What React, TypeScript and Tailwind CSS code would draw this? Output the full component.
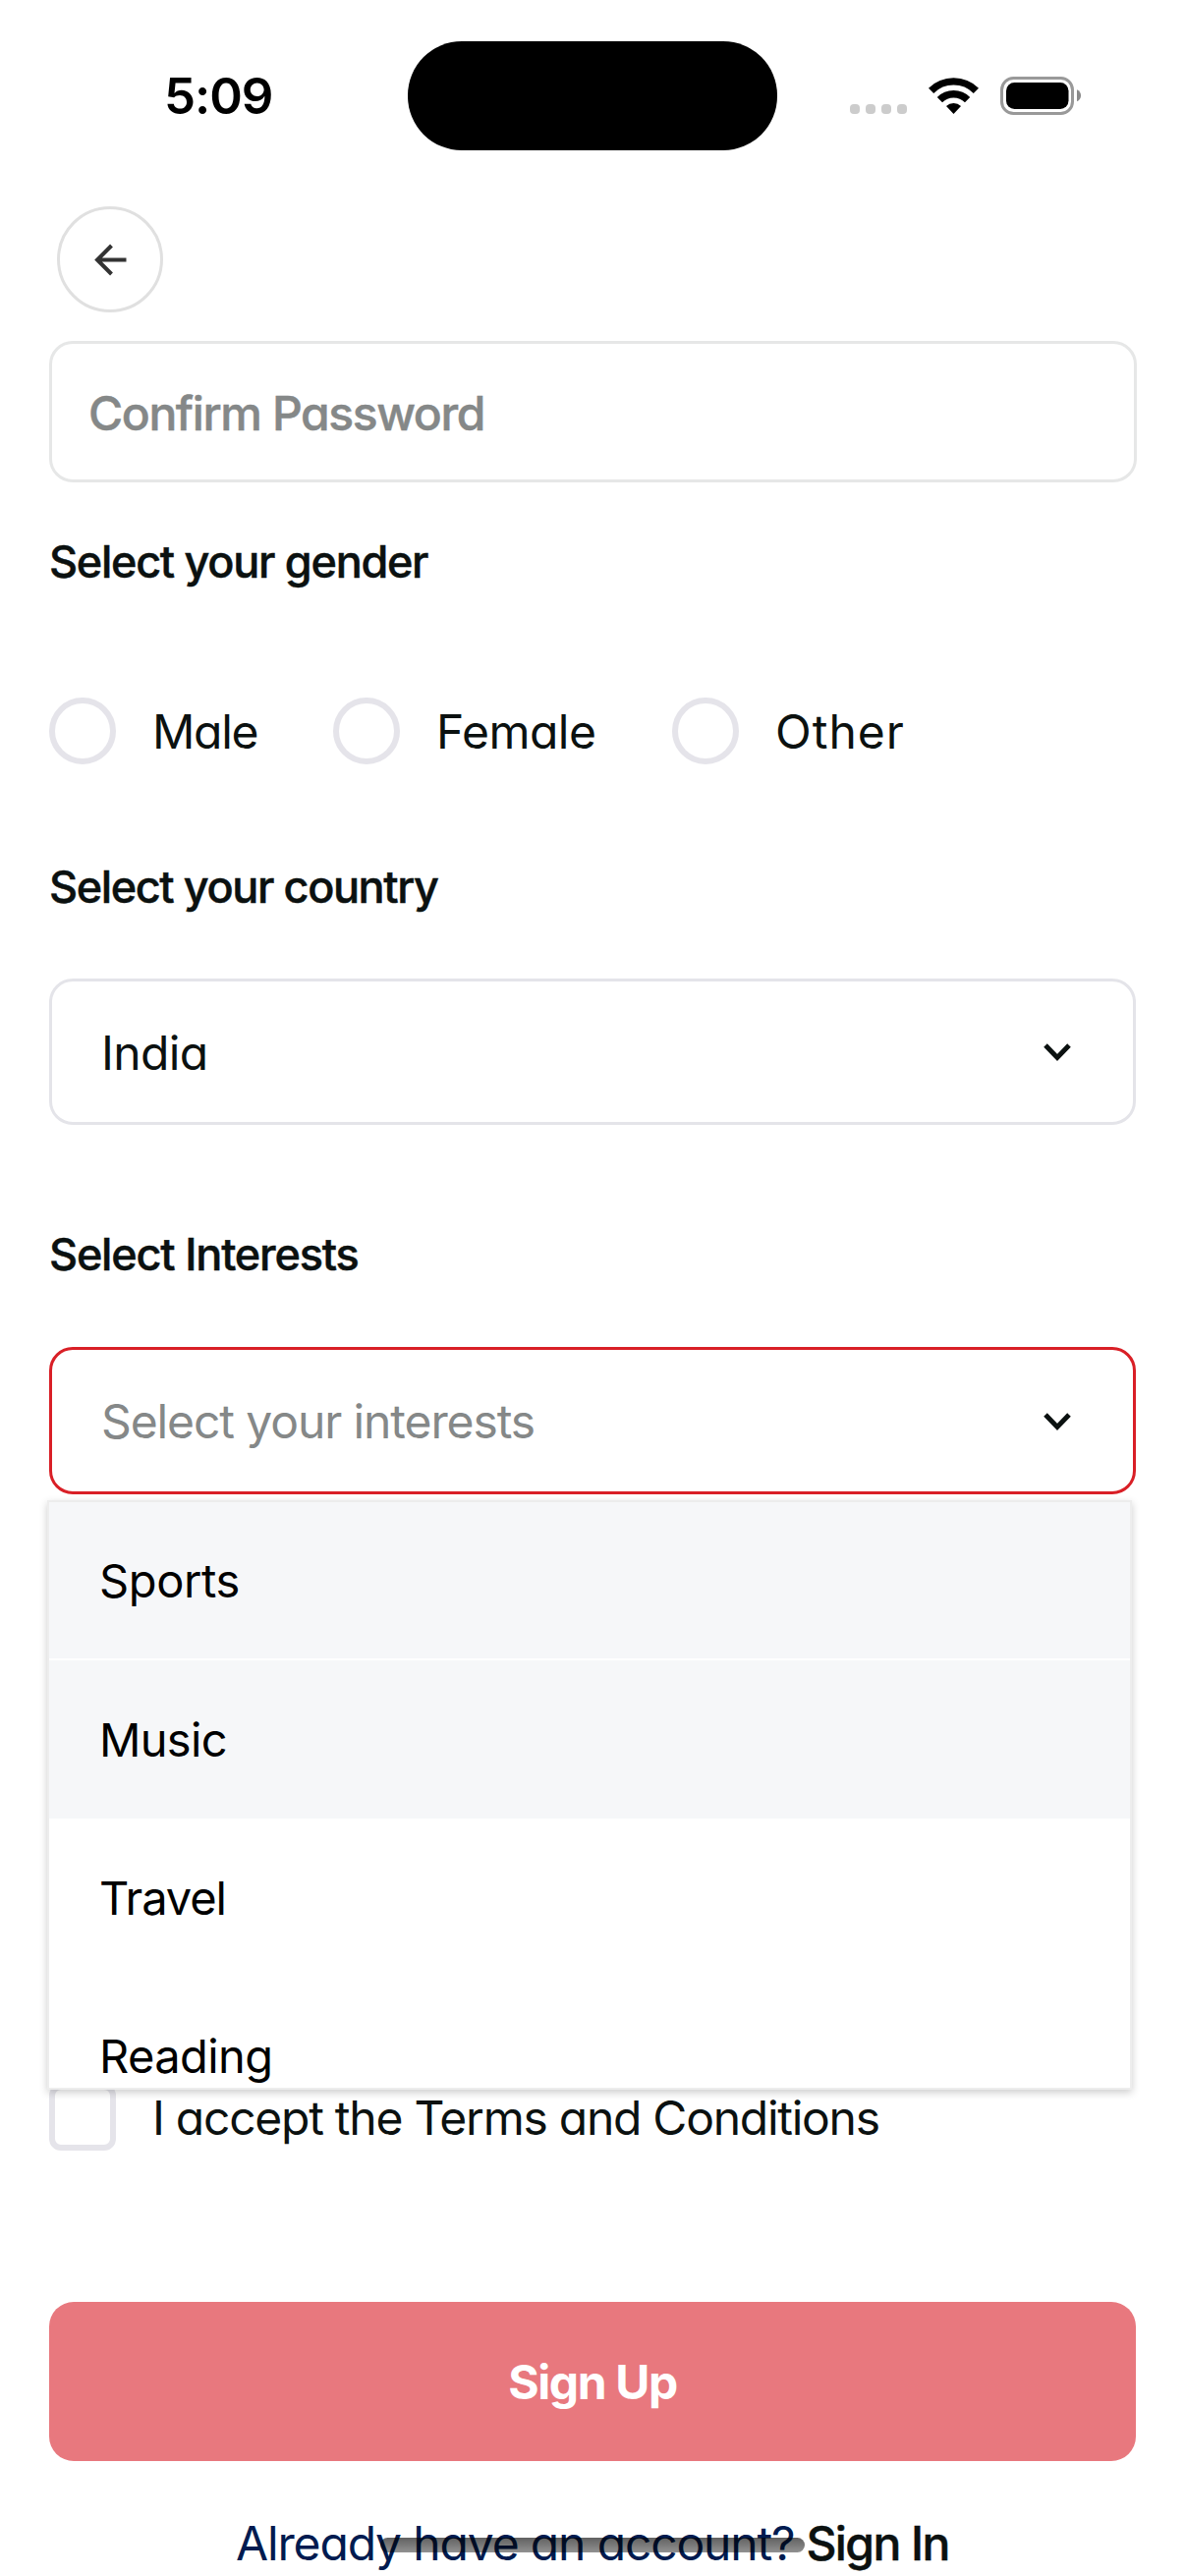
import type { ReactNode } from "react";

function StatusBar() {
  return (
    <header className="flex h-[210px] items-start pt-[41px]">
      <div className="flex h-[111px] w-[415px] items-center pt-[2px] pl-[167px] text-[51px] leading-none font-semibold tracking-[-1.1px] text-black">
        5:09
      </div>
      <div className="mt-[0.5px] h-[111px] w-[376px] rounded-[55px] bg-black" />
      <div className="flex h-[111px] flex-1 items-center pt-[2px] pl-[74px]">
        <div className="mt-[27px] flex gap-[6px]">
          <i className="size-[10px] rounded-[4px] bg-[#cccccc]" />
          <i className="size-[10px] rounded-[4px] bg-[#cccccc]" />
          <i className="size-[10px] rounded-[4px] bg-[#cccccc]" />
          <i className="size-[10px] rounded-[4px] bg-[#cccccc]" />
        </div>
        <svg className="ml-[22px] h-[37px] w-[51px]" viewBox="0 0 51 37" fill="none" stroke="#000">
          <path d="M2.6 13.4 A32.4 32.4 0 0 1 48.4 13.4" strokeWidth="7.4" />
          <path d="M11.4 22.6 A20 20 0 0 1 39.6 22.6" strokeWidth="7.4" />
          <path d="M25.5 37 L18 29 A10.8 10.8 0 0 1 33 29 Z" fill="#000" stroke="none" />
        </svg>
        <svg className="ml-[22px] h-[39px] w-[83px]" viewBox="0 0 83 39" fill="none">
          <rect x="1.5" y="1.5" width="72" height="36" rx="12" stroke="#999" strokeWidth="3" />
          <rect x="6" y="6" width="63.5" height="27" rx="8.5" fill="#000" />
          <path d="M78 13.2 Q82 15 82 19.2 T78 25.2 Z" fill="#8a8a8a" />
        </svg>
      </div>
    </header>
  );
}

function Label({ children, className }: { children: ReactNode; className: string }) {
  return (
    <h2 className={`flex h-[61px] items-center text-[45px] font-medium text-[#0b1110] [-webkit-text-stroke:0.5px] ${className}`}>
      {children}
    </h2>
  );
}

function Radio({ children, className }: { children: ReactNode; className: string }) {
  return (
    <label className={`flex items-center gap-[37px] ${className}`}>
      <i className="size-[68px] rounded-full border-[6px] border-[#e5e4ea]" />
      <span className="pt-[2px]">{children}</span>
    </label>
  );
}

function Chevron() {
  return (
    <svg className="mt-[1px] mr-[63px] h-[20px] w-[28px]" viewBox="0 0 28 20" fill="none" stroke="#0b1110" strokeWidth="5">
      <path d="M2 3 L14 15.4 L26 3" />
    </svg>
  );
}

function Option({ children, className }: { children: ReactNode; className: string }) {
  return <li className={`flex h-[161px] shrink-0 items-center pl-[51px] text-[47px] text-black ${className}`}>{children}</li>;
}

export default function App() {
  return (
    <div className="relative h-[2622px] w-[1206px] overflow-hidden bg-white font-['Inter',sans-serif] leading-none whitespace-nowrap">
      <StatusBar />
      <main className="flex flex-col px-[50px] text-[48px] text-[#0b1110] [font-feature-settings:'cv11']">
        <button className="ml-[8px] flex size-[108px] items-center justify-center rounded-full border-[3px] border-[#e0e0e0]">
          <svg className="size-[33px]" viewBox="0 0 33 33" fill="none" stroke="#333" strokeWidth="4">
            <path d="M32.5 16.5 H3 M17.5 2 L3 16.5 L17.5 31" />
          </svg>
        </button>

        <div className="mt-[29px] flex h-[144px] w-[1107px] items-center rounded-[24px] border-[3px] border-[#e6e7e7] pt-[3px] pl-[37px] font-medium tracking-[-1.4px] text-[#858888] [-webkit-text-stroke:0.5px]">
          Confirm Password
        </div>

        <Label className="mt-[50px] tracking-[-1.28px]">Select your gender</Label>
        <div className="mt-[108px] flex">
          <Radio className="w-[289px] tracking-[-1.3px]">Male</Radio>
          <Radio className="w-[345px] tracking-[-0.5px]">Female</Radio>
          <Radio className="tracking-[1px]">Other</Radio>
        </div>

        <Label className="mt-[94px] tracking-[-1.39px]">Select your country</Label>
        <div className="mt-[63px] flex h-[149px] items-center justify-between rounded-[24px] border-[3px] border-[#e4e4e9] pl-[50px] tracking-[-0.6px]">
          <span className="pt-[2px]">India</span>
          <Chevron />
        </div>

        <Label className="mt-[101px] tracking-[-1.19px]">Select Interests</Label>
        <div className="relative mt-[64px]">
          <div className="flex h-[150px] items-center justify-between rounded-[24px] border-[3px] border-[#d91f26] pl-[50px] tracking-[-1.1px] text-[#858888]">
            <span className="pt-px">Select your interests</span>
            <Chevron />
          </div>
          <ul className="absolute top-[156px] left-[-2px] z-10 flex h-[600px] w-[1104px] flex-col overflow-hidden border-2 border-[#ededed] bg-white shadow-[0_3px_8px_rgba(0,0,0,0.2)] [font-feature-settings:normal]">
            <Option className="border-b-2 border-white bg-[#f6f7f9] tracking-[-0.4px]">Sports</Option>
            <Option className="bg-[#f6f7f9] tracking-[-0.7px]">Music</Option>
            <Option className="tracking-[-1.1px]">Travel</Option>
            <Option className="tracking-[-0.6px]">Reading</Option>
          </ul>
        </div>

        <label className="mt-[600px] flex items-center gap-[37px] tracking-[-1.26px]">
          <i className="size-[68px] rounded-[12px] border-[6px] border-[#e5e4ea]" />
          <span className="pt-[2px]">I accept the Terms and Conditions</span>
        </label>

        <button className="mt-[154px] flex h-[162px] items-center justify-center rounded-[25px] bg-[#e8787e] pt-px font-bold tracking-[-1.4px] text-white">
          Sign Up
        </button>

        <p className="mt-[54px] flex h-[60px] items-center pl-[190px] text-[#001b50]">
          <span className="tracking-[-1.15px]">Already have an account?</span>
          <a className="ml-[12px] font-medium tracking-[-1.6px] text-[#0b1110] [-webkit-text-stroke:0.5px]">Sign In</a>
        </p>
      </main>
      <div className="absolute top-[2583px] left-[387px] h-[15px] w-[432px] rounded-full bg-linear-to-b from-black/62 to-black/43" />
    </div>
  );
}
